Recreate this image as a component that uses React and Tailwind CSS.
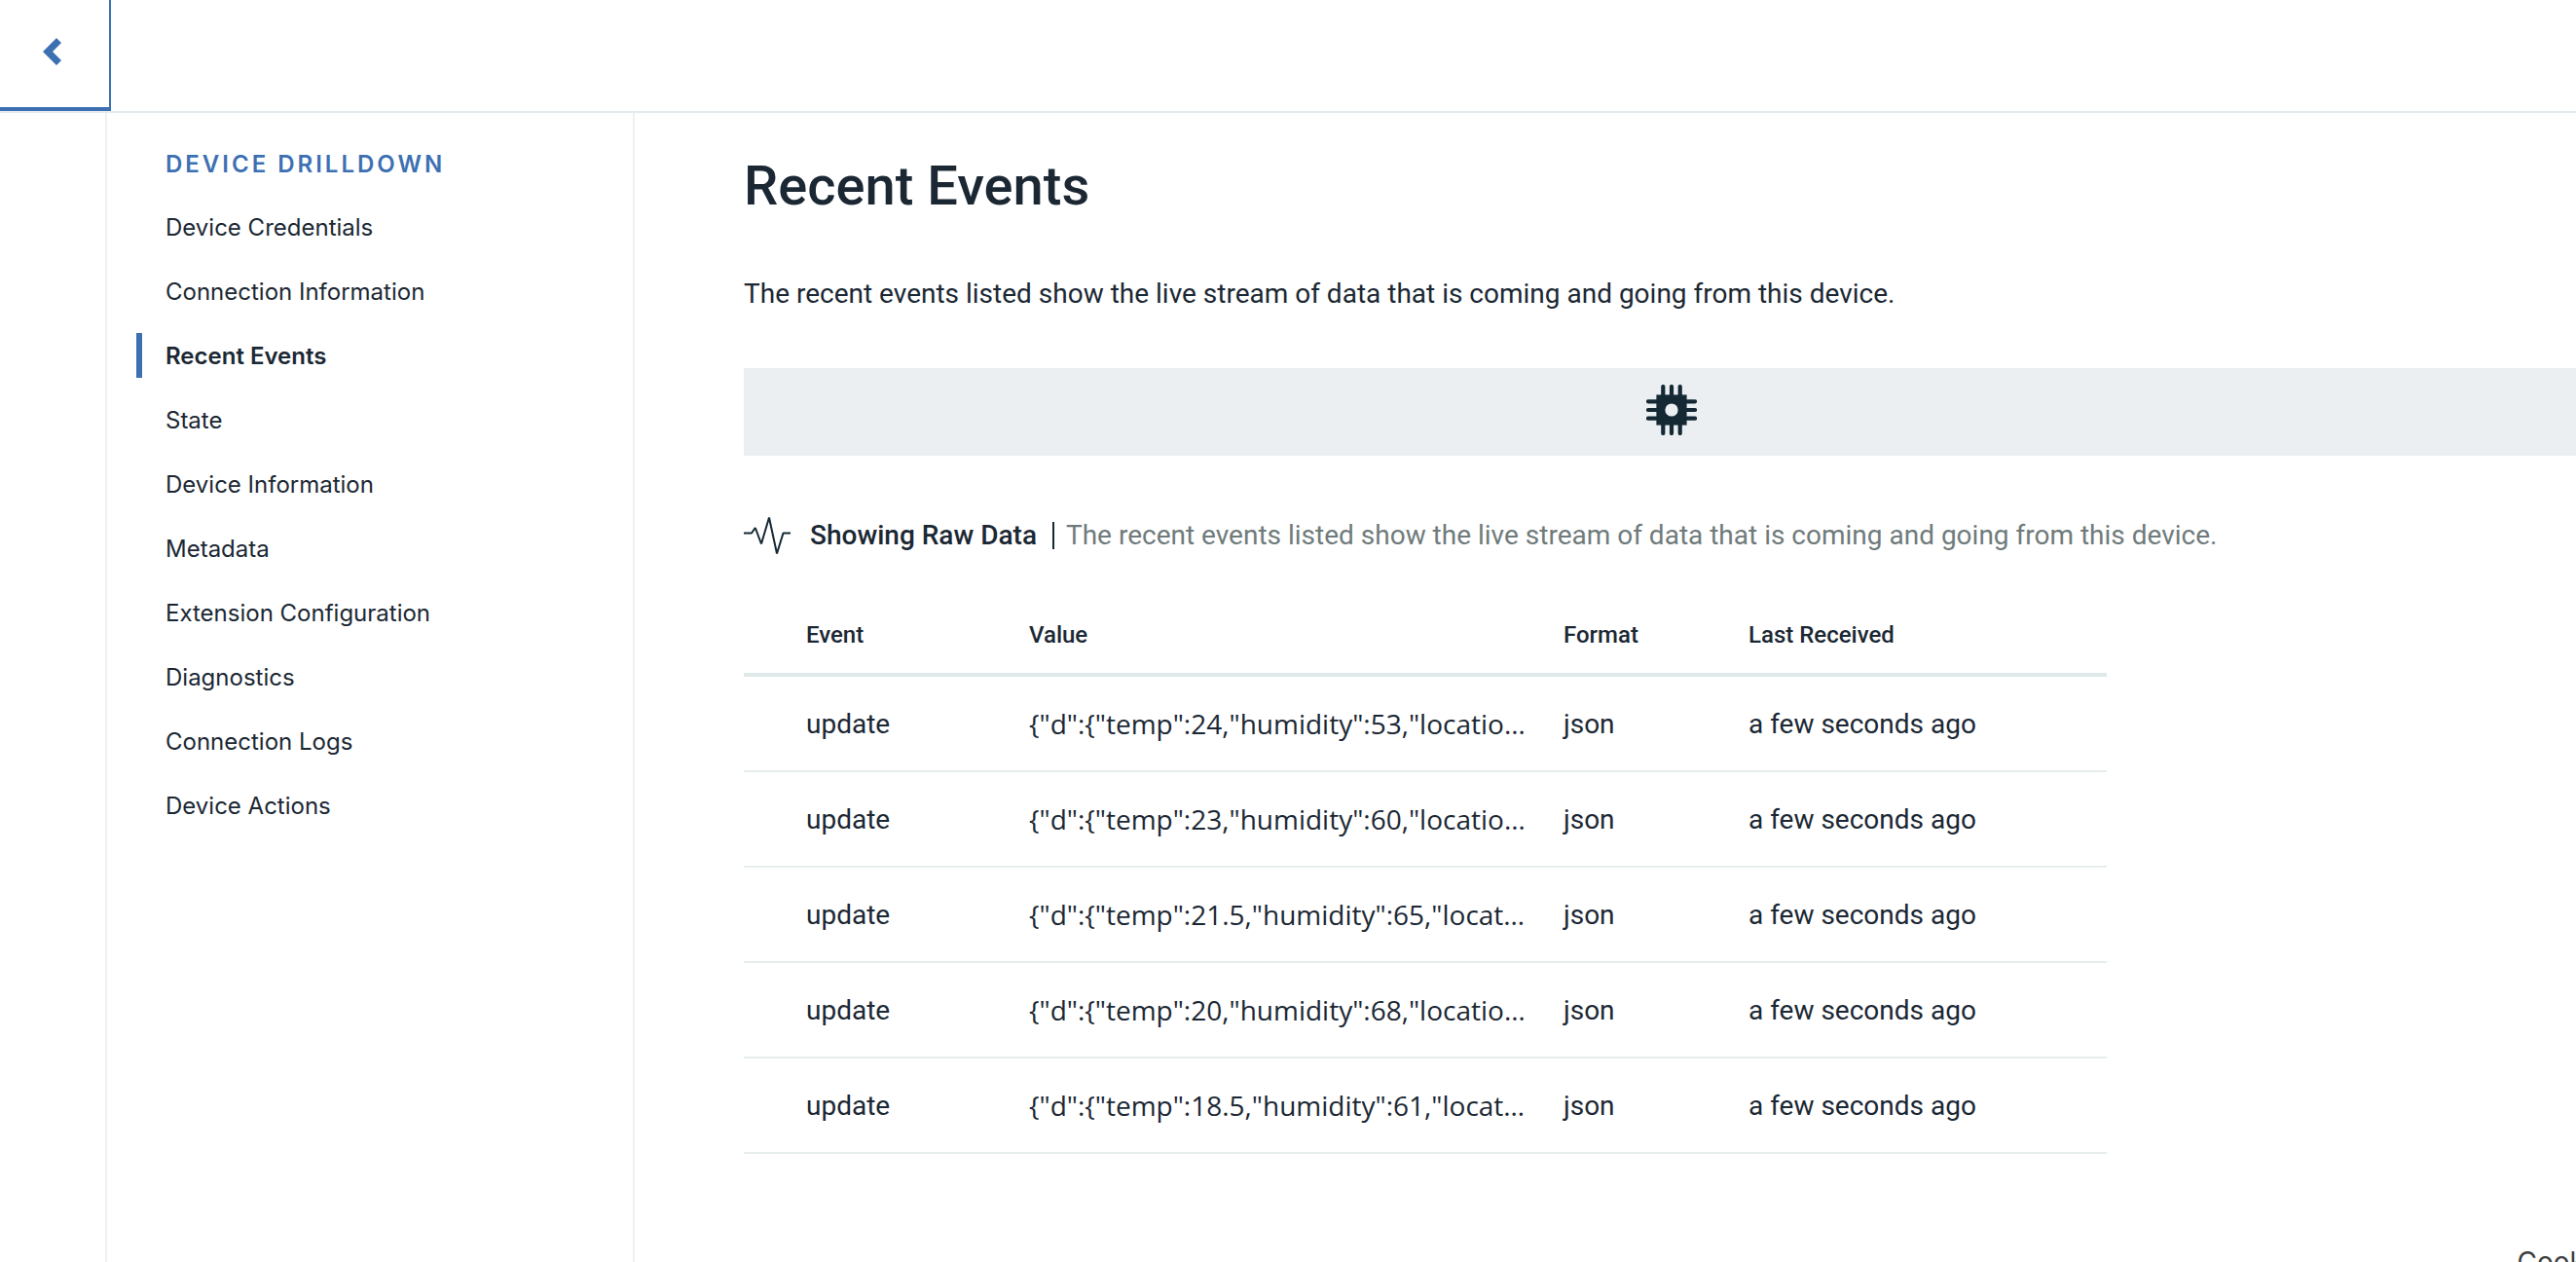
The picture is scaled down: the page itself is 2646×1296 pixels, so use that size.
const NAV_ITEMS = [
  "Device Credentials",
  "Connection Information",
  "Recent Events",
  "State",
  "Device Information",
  "Metadata",
  "Extension Configuration",
  "Diagnostics",
  "Connection Logs",
  "Device Actions",
];

const EVENTS = [
  '{"d":{"temp":24,"humidity":53,"locatio…',
  '{"d":{"temp":23,"humidity":60,"locatio…',
  '{"d":{"temp":21.5,"humidity":65,"locat…',
  '{"d":{"temp":20,"humidity":68,"locatio…',
  '{"d":{"temp":18.5,"humidity":61,"locat…',
];

const DESCRIPTION =
  "The recent events listed show the live stream of data that is coming and going from this device.";

function ChevronIcon() {
  return (
    <svg width="20" height="28" viewBox="0 0 20 28" fill="#3d70b2" aria-hidden="true">
      <path d="M14 0 19 5 10 14l9 9-5 5L0 14z" />
    </svg>
  );
}

function ChipIcon() {
  const pins = [17.3, 26, 34.7];
  return (
    <svg width="52" height="52" viewBox="0 0 52 52" aria-hidden="true">
      <g stroke="#152935" strokeWidth="4.2" strokeLinecap="round">
        {pins.map((p) => (
          <g key={p}>
            <path d={`M${p} 2V50`} />
            <path d={`M2 ${p}H50`} />
          </g>
        ))}
      </g>
      <rect x="10.4" y="10.4" width="31.2" height="31.2" fill="#152935" />
      <circle cx="26" cy="26" r="6.6" fill="#ebeff2" />
    </svg>
  );
}

function PulseIcon() {
  return (
    <svg width="48" height="40" viewBox="0 0 48 40" fill="none" stroke="#152935" strokeWidth="2" aria-hidden="true">
      <path strokeLinejoin="bevel" d="M0 17.5H8L11.8 12 18 28.5 26 1.5 34 38.5 40.5 17.5H48" />
    </svg>
  );
}

function Sidebar() {
  return (
    <nav
      aria-label="Device drilldown"
      className="ml-[108px] w-[544px] shrink-0 border-x-2 border-[#f0f0f0] pt-[38px] pl-[30px] font-['Inter',sans-serif] text-2xl"
    >
      <h2 className="mb-[26px] pl-[30px] leading-[30px] font-semibold tracking-[3px] text-[#3d70b2]">
        DEVICE DRILLDOWN
      </h2>
      <ul className="flex flex-col gap-5">
        {NAV_ITEMS.map((item) => {
          const active = item === "Recent Events";
          return (
            <li key={item}>
              <a
                href="#"
                aria-current={active ? "page" : undefined}
                className={
                  active
                    ? "block border-l-[6px] border-[#3d70b2] pt-[2px] pl-6 leading-[44px] font-semibold"
                    : "block border-l-[6px] border-transparent pt-[2px] pl-6 leading-[44px]"
                }
              >
                {item}
              </a>
            </li>
          );
        })}
      </ul>
    </nav>
  );
}

function EventsTable() {
  const th = "border-b-4 border-[#dfe9e9] pt-[27px] pb-[23px] text-left text-2xl leading-8 font-medium";
  const td = "border-b-2 border-[#e6eeed] leading-10";
  const cell = `${td} pt-[29px] pb-[27px]`;
  return (
    <table className="mt-[39px] w-[1400px] table-fixed border-separate border-spacing-0">
      <colgroup>
        <col className="w-[293px]" />
        <col className="w-[549px]" />
        <col className="w-[190px]" />
        <col />
      </colgroup>
      <thead>
        <tr>
          <th scope="col" className={`${th} pl-16`}>Event</th>
          <th scope="col" className={th}>Value</th>
          <th scope="col" className={th}>Format</th>
          <th scope="col" className={th}>Last Received</th>
        </tr>
      </thead>
      <tbody>
        {EVENTS.map((value) => (
          <tr key={value}>
            <td className={`${cell} pl-16`}>update</td>
            <td className={`${td} py-7 font-['Open_Sans',sans-serif] whitespace-nowrap`}>{value}</td>
            <td className={cell}>json</td>
            <td className={cell}>a few seconds ago</td>
          </tr>
        ))}
      </tbody>
    </table>
  );
}

export default function App() {
  return (
    <div className="relative flex h-screen flex-col overflow-hidden bg-white text-[#1b2834]">
      <header className="flex shrink-0 border-b-2 border-[#e3ebee]">
        <button
          type="button"
          aria-label="Back"
          className="flex h-[114px] w-[114px] items-center justify-center border-r-2 border-b-4 border-[#3d70b2] pr-1 pb-1"
        >
          <ChevronIcon />
        </button>
      </header>
      <div className="flex grow">
        <Sidebar />
        <main className="-mr-6 min-w-0 grow pt-[43px] pl-28 font-['Roboto',sans-serif] text-[28px]">
          <h1 className="text-[56px] leading-[64px] font-medium">Recent Events</h1>
          <p className="mt-[59px] leading-10">{DESCRIPTION}</p>
          <div className="mt-14 flex h-[90px] items-center justify-center bg-[#ebeff2] pb-1">
            <ChipIcon />
          </div>
          <div className="mt-[62px] flex items-center leading-10">
            <PulseIcon />
            <strong className="ml-5 font-medium">Showing Raw Data</strong>
            <span className="mr-3 ml-4 h-7 w-[2px] bg-[#152935]" />
            <p className="text-[#6f7b7b]">{DESCRIPTION}</p>
          </div>
          <EventsTable />
        </main>
      </div>
      <button
        type="button"
        className="absolute -right-8 -bottom-5 font-['Inter',sans-serif] text-[28px] leading-10 text-[#3d3d3d]"
      >
        Cookie
      </button>
    </div>
  );
}
